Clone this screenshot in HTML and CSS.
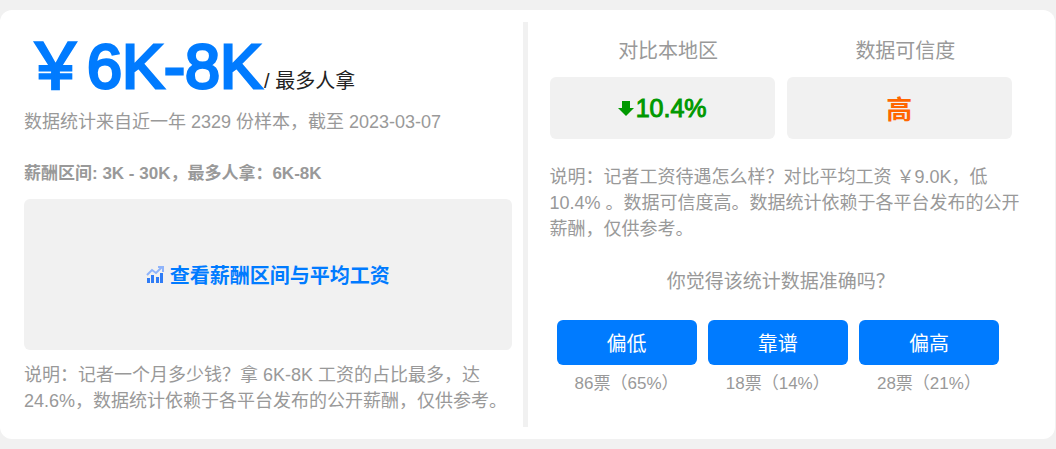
FILE: index.html
```html
<!DOCTYPE html>
<html lang="zh-CN">
<head>
    <meta charset="UTF-8">
    <meta name="viewport" content="width=device-width, initial-scale=1.0">
    <title>记者工资待遇</title>
    <link rel="stylesheet" href="styles.css">
</head>
<body>

    <div class="card">
        <div class="salary">
            <div class="headline"><span class="amount">￥6K-8K</span><span class="unit">/ 最多人拿</span></div>
            <p class="text">数据统计来自近一年 2329 份样本，截至 2023-03-07</p>
            <p class="range">薪酬区间: 3K - 30K，最多人拿：6K-8K</p>
            <a class="chart-link" href="#">
                <svg class="chart-icon" viewBox="0 0 18 18" aria-hidden="true">
                    <path d="M1 9 L6 4 L10 7 L16 1" fill="none" stroke="#8fb4fb" stroke-width="2"/>
                    <path d="M12 1 H17 V6" fill="none" stroke="#8fb4fb" stroke-width="2"/>
                    <path d="M1 12h3v5H1z M5 9h3v8H5z M10 11h3v6h-3z M14 7h3v10h-3z" fill="#2f7cf6"/>
                </svg>
                <span>查看薪酬区间与平均工资</span>
            </a>
            <p class="text">说明：记者一个月多少钱？拿 6K-8K 工资的占比最多，达 24.6%，数据统计依赖于各平台发布的公开薪酬，仅供参考。</p>
        </div>

        <div class="compare">
            <div class="tiles">
                <div class="tile">
                    <div class="tile-label">对比本地区</div>
                    <div class="tile-value down">
                        <svg class="arrow" viewBox="0 0 16 16" aria-hidden="true">
                            <path d="M4 1h8v7h4L8 16 0 8h4z" fill="#090"/>
                        </svg>
                        <span>10.4%</span>
                    </div>
                </div>
                <div class="tile">
                    <div class="tile-label">数据可信度</div>
                    <div class="tile-value trust">高</div>
                </div>
            </div>
            <p class="text note">说明：记者工资待遇怎么样？对比平均工资 ￥9.0K，低 10.4% 。数据可信度高。数据统计依赖于各平台发布的公开薪酬，仅供参考。</p>
            <p class="question">你觉得该统计数据准确吗？</p>
            <div class="votes">
                <div class="vote">
                    <button type="button">偏低</button>
                    <div class="count">86票（65%）</div>
                </div>
                <div class="vote">
                    <button type="button">靠谱</button>
                    <div class="count">18票（14%）</div>
                </div>
                <div class="vote">
                    <button type="button">偏高</button>
                    <div class="count">28票（21%）</div>
                </div>
            </div>
        </div>
    </div>

</body>
</html>
```
FILE: styles.css
```css
* {
    box-sizing: border-box;
}
body {
    margin: 0;
    padding: 10px 1px 10px 0;
    background-color: #f1f1f1;
    color: #999;
    font-family: "Liberation Sans", "Noto Sans CJK SC", sans-serif;
}
p {
    margin: 0;
}
.card {
    display: flex;
    padding: 12px 0;
    background-color: #fff;
    border-radius: 12px;
}
/* Colonne gauche */
.salary {
    width: 50%;
    padding: 0 11px 13px 24px;
    border-right: 5px solid #f1f1f1;
}
.headline {
    height: 87px;
    line-height: 88px;
    white-space: nowrap;
}
.amount {
    color: #007bff;
    font-size: 63px;
    -webkit-text-stroke: 3px #007bff;
}
.unit {
    margin-left: 2px;
    color: #222;
    font-size: 20px;
}
.text {
    font-size: 18px;
    line-height: 26px;
}
.range {
    margin-top: 26px;
    font-size: 17px;
    line-height: 26px;
    font-weight: bold;
}
.chart-link {
    display: flex;
    align-items: center;
    justify-content: center;
    gap: 6px;
    height: 151px;
    margin: 12px 0;
    border-radius: 6px;
    background-color: #f1f1f1;
    color: #007bff;
    font-size: 20px;
    font-weight: bold;
    text-decoration: none;
}
.chart-icon {
    width: 18px;
    height: 18px;
}
/* Colonne droite */
.compare {
    width: 50%;
    padding: 16px 43px 0 22px;
}
.tiles {
    display: flex;
    gap: 12px;
}
.tile {
    flex: 1;
    text-align: center;
}
.tile-label {
    margin: 0 0 13px 12px;
    font-size: 20px;
    line-height: 26px;
}
.tile-value {
    display: flex;
    align-items: center;
    justify-content: center;
    height: 62px;
    border-radius: 6px;
    background-color: #f1f1f1;
    font-size: 26px;
}
.down {
    gap: 2px;
    color: #090;
    font-size: 25px;
    -webkit-text-stroke: 1px #090;
}
.trust {
    padding-bottom: 2px;
    color: #f60;
    font-weight: bold;
}
.arrow {
    width: 16px;
    height: 16px;
}
.note {
    margin: 25px -20px 0 0;
}
.question {
    margin: 27px 0 25px;
    font-size: 19px;
    line-height: 26px;
    text-align: center;
}
.votes {
    display: flex;
    gap: 11px;
    padding: 0 13px 0 7px;
}
.vote {
    flex: 1;
    text-align: center;
}
.vote button {
    display: block;
    width: 100%;
    height: 45px;
    margin-bottom: 6px;
    border: none;
    border-radius: 6px;
    background-color: #007bff;
    color: #fff;
    font-family: inherit;
    font-size: 20px;
    cursor: pointer;
}
.count {
    font-size: 17px;
    line-height: 26px;
}
```
